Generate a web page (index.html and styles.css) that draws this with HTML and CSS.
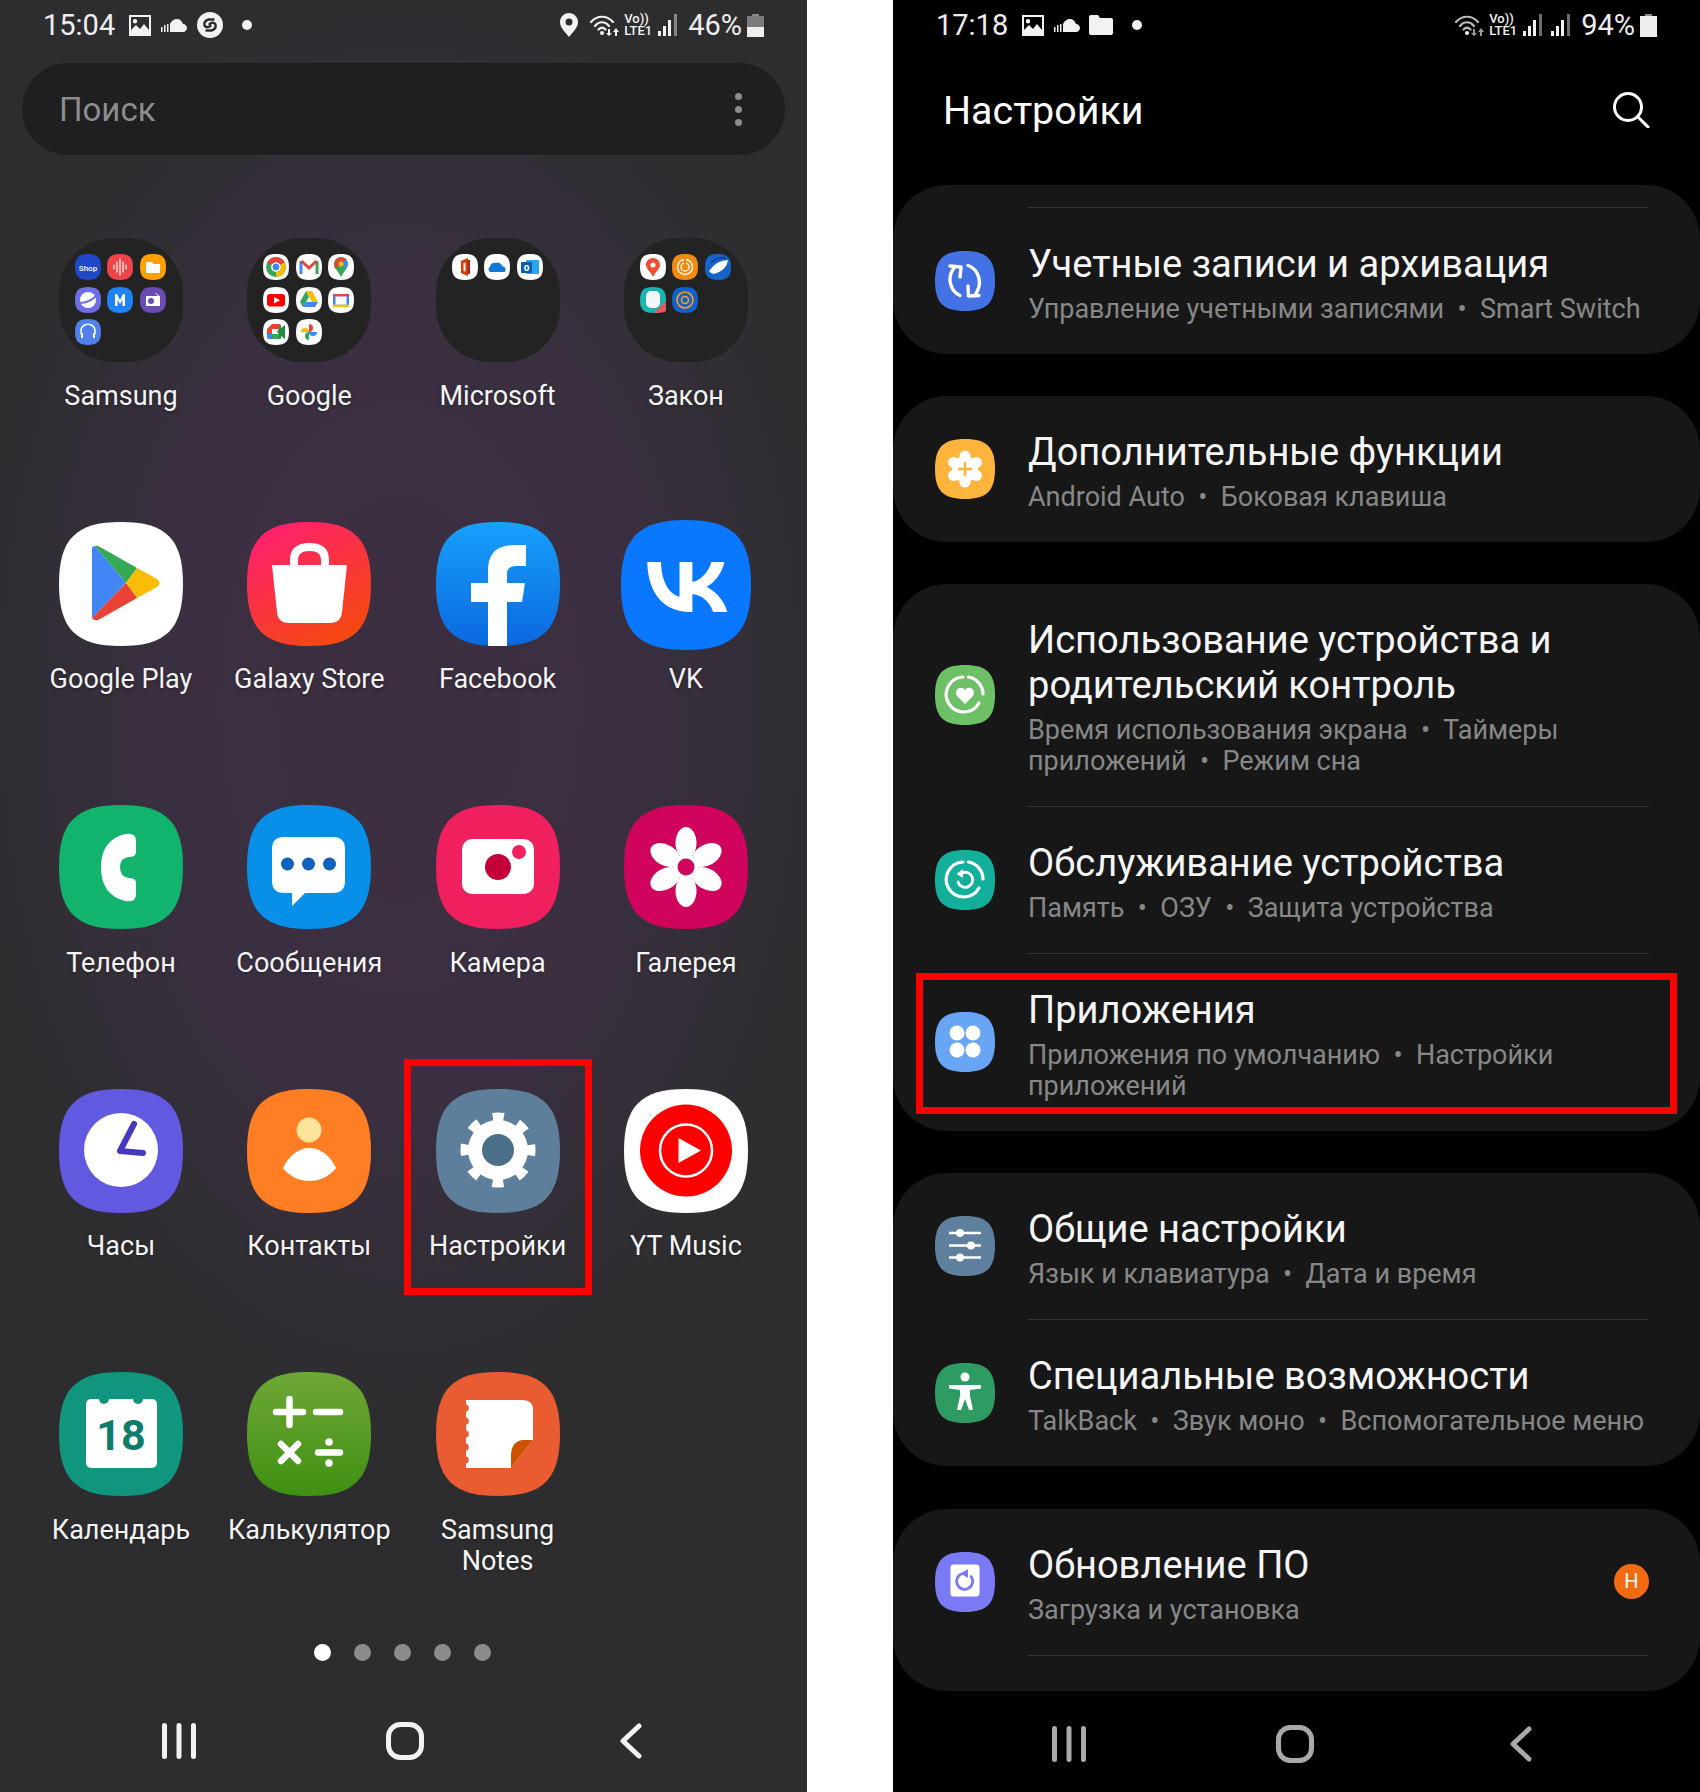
FILE: index.html
```html
<!DOCTYPE html>
<html lang="ru">
<head>
    <meta charset="UTF-8">
    <meta name="viewport" content="width=device-width, initial-scale=1.0">
    <title>Настройки приложений</title>
    <link rel="stylesheet" href="styles.css">
</head>
<body>
    <!-- shared shapes -->
    <svg class="sprite" aria-hidden="true">
        <defs>
            <symbol id="sq" viewBox="0 0 124 124"><path d="M62 0C107 0 124 17 124 62S107 124 62 124 0 107 0 62 17 0 62 0Z"/></symbol>
            <symbol id="photo" viewBox="0 0 22 21"><path fill-rule="evenodd" d="M0 0H22V21H0ZM2 2V15L7 10 11 14 15 9 20 15V2ZM6 4A2.2 2.2 0 1 1 6 8.400 2.200 2.200 0 0 1 6 4Z"/></symbol>
            <symbol id="cloud" viewBox="0 0 26 13"><path d="M9 13V5C10 2 13 0 16 0 19 0 21 2 22 5 24 5 26 7 26 9 26 11 24 13 22 13ZM6 13V5H7.500V13ZM3 13V6H4.500V13ZM0 13V8H1.500V13Z"/></symbol>
            <symbol id="bars" viewBox="0 0 19 22"><path d="M0 17H3V22H0ZM5 12H8V22H5ZM10 6H13V22H10Z"/><path opacity=".45" d="M16 0H19V22H16Z"/></symbol>
            <linearGradient id="store" x1="0.200" y1="0" x2="0.800" y2="1"><stop offset="0" stop-color="#ff1f70"/><stop offset="1" stop-color="#f44a0a"/></linearGradient>
            <linearGradient id="fb" x1="0" y1="0" x2="0" y2="1"><stop offset="0" stop-color="#18a0fb"/><stop offset="1" stop-color="#0a68e0"/></linearGradient>
            <linearGradient id="calc" x1="0" y1="0" x2="0" y2="1"><stop offset="0" stop-color="#6fa736"/><stop offset="1" stop-color="#3e9012"/></linearGradient>
        </defs>
    </svg>

    <section class="phone phone-home">
        <div class="status">
            <span class="clock">15:04</span>
            <svg class="st-photo"><use href="#photo"/></svg>
            <svg class="st-cloud"><use href="#cloud"/></svg>
            <svg class="st-shazam" viewBox="0 0 26 26"><circle cx="13" cy="13" r="13" fill="#f2f2f2"/><path d="M16.500 7.500 11.500 7.500Q6.500 9 7.500 13.500 9.500 16.500 13.500 14M9.500 18.500H14.500Q19.500 17 18.500 12.500 16.500 9.500 12.500 12" fill="none" stroke="#2d2d2f" stroke-width="2.400" stroke-linecap="round"/></svg>
            <i class="st-dot"></i>
            <span class="spacer"></span>
            <svg class="st-pin" viewBox="0 0 18 24"><path fill-rule="evenodd" d="M9 0C14 0 18 4 18 9 18 15 12 20 9 24 6 20 0 15 0 9 0 4 4 0 9 0ZM9 5.500A3.500 3.500 0 1 0 9 12.500 3.500 3.500 0 0 0 9 5.500Z"/></svg>
            <svg class="st-wifi" viewBox="0 0 30 22"><g fill="none" stroke="currentColor" stroke-width="2.200" stroke-linecap="round"><path d="M1 8C7 1 17 1 23 8M5 12C9 7 15 7 19 12M8.500 15.500C11 13 13 13 15.500 15.500"/></g><circle cx="12" cy="19" r="2"/><path d="M18 15H20V19H22L19 22 16 19H18ZM25 22V18H23L26 14 29 18H27V22Z"/></svg>
            <span class="volte">Vo))<br>LTE1</span>
            <svg class="st-bars"><use href="#bars"/></svg>
            <span class="percent">46%</span>
            <span class="battery"><i class="battery-top"></i><i class="battery-level level-46"></i></span>
        </div>

        <div class="search">
            <span class="search-text">Поиск</span>
            <span class="kebab"><i></i><i></i><i></i></span>
        </div>

        <div class="apps">
            <div class="app">
                <div class="folder">
                    <svg class="mini" viewBox="0 0 26 26"><use href="#sq" width="26" height="26" fill="#1f48c9"/><text x="13" y="17" class="mini-text">Shop</text></svg>
                    <svg class="mini" viewBox="0 0 26 26"><use href="#sq" width="26" height="26" fill="#ef4448"/><path d="M7 11V15M10 8V18M13 5V21M16 8V18M19 11V15" stroke="#fff" stroke-width="1.200" stroke-linecap="round"/></svg>
                    <svg class="mini" viewBox="0 0 26 26"><use href="#sq" width="26" height="26" fill="#ffa000"/><path d="M6 8H12L13.500 10H20V19H6Z" fill="#fff"/></svg>
                    <svg class="mini" viewBox="0 0 26 26"><use href="#sq" width="26" height="26" fill="#6f6de6"/><circle cx="13" cy="13" r="8" fill="#fff"/><path d="M5 16Q14 16 21 9" fill="none" stroke="#6f6de6" stroke-width="2"/></svg>
                    <svg class="mini" viewBox="0 0 26 26"><use href="#sq" width="26" height="26" fill="#1f83f4"/><path d="M8 19V7H10L13 13 16 7H18V19H15.500V13L13 17 10.500 13V19Z" fill="#fff"/></svg>
                    <svg class="mini" viewBox="0 0 26 26"><use href="#sq" width="26" height="26" fill="#6a4bb4"/><path d="M6 9H20V19H6Z" fill="#fff"/><circle cx="11" cy="14" r="3" fill="#6a4bb4"/><path d="M15.500 6.500 19 9" stroke="#fff"/></svg>
                    <svg class="mini" viewBox="0 0 26 26"><use href="#sq" width="26" height="26" fill="#4f7fe8"/><path d="M6 15V12C6 3 20 3 20 12V15" fill="none" stroke="#fff" stroke-width="1.500"/><path d="M6 14H8V19H6ZM18 14H20V19H18Z" fill="#fff"/></svg>
                </div>
                <div class="label">Samsung</div>
            </div>
            <div class="app">
                <div class="folder">
                    <svg class="mini" viewBox="0 0 26 26"><use href="#sq" width="26" height="26" fill="#fff"/><circle cx="13" cy="13" r="7.500" fill="none" stroke="#34a853" stroke-width="5"/><path d="M6.500 9.500A7.500 7.500 0 0 1 19.500 9.500" fill="none" stroke="#ea4335" stroke-width="5"/><path d="M19.500 9.500A7.500 7.500 0 0 1 13 20.500" fill="none" stroke="#fbbc04" stroke-width="5"/><circle cx="13" cy="13" r="4" fill="#4285f4" stroke="#fff"/></svg>
                    <svg class="mini" viewBox="0 0 26 26"><use href="#sq" width="26" height="26" fill="#fff"/><path d="M5 20V7" stroke="#4285f4" stroke-width="3"/><path d="M21 20V7" stroke="#34a853" stroke-width="3"/><path d="M5.500 7 13 14 20.500 7" fill="none" stroke="#ea4335" stroke-width="3"/></svg>
                    <svg class="mini" viewBox="0 0 26 26"><use href="#sq" width="26" height="26" fill="#fff"/><path d="M13 3C9 3 6 6 6 10 6 14 10 17 13 23 16 17 20 14 20 10 20 6 17 3 13 3Z" fill="#34a853"/><path d="M9 5C11 3 16 3 18 5L7 15C6 12 6 8 9 5Z" fill="#ea4335"/><path d="M18 5C20 8 20 12 17 15L13 10Z" fill="#4285f4"/><circle cx="13" cy="10" r="2.500" fill="#fbbc04"/></svg>
                    <svg class="mini" viewBox="0 0 26 26"><use href="#sq" width="26" height="26" fill="#fff"/><rect x="4" y="7" width="18" height="12.500" rx="3" fill="#f00"/><path d="M11 10V16.500L17 13.250Z" fill="#fff"/></svg>
                    <svg class="mini" viewBox="0 0 26 26"><use href="#sq" width="26" height="26" fill="#fff"/><path d="M10 4H16L22 15H16Z" fill="#fbbc04"/><path d="M10 4 4 15 7 20 13 10Z" fill="#34a853"/><path d="M7 20H19L22 15H10Z" fill="#4285f4"/></svg>
                    <svg class="mini" viewBox="0 0 26 26"><use href="#sq" width="26" height="26" fill="#fff"/><rect x="5" y="7" width="16" height="13" rx="2" fill="#4285f4"/><rect x="5" y="7" width="16" height="2.500" fill="#ea4335"/><rect x="5" y="17.500" width="16" height="2.500" fill="#fbbc04"/><rect x="7.500" y="9.500" width="11" height="8" fill="#fff"/></svg>
                    <svg class="mini" viewBox="0 0 26 26"><use href="#sq" width="26" height="26" fill="#fff"/><path d="M4 10 9 5H16V10H9V15H4Z" fill="#ea4335"/><path d="M4 15H9V20H6Q4 20 4 18Z" fill="#4285f4"/><path d="M9 15H16V20H9Z" fill="#34a853"/><path d="M16 5Q18 5 18 7V9L22 6V20L18 17V19Q18 20 16 20V15L14 12.500 16 10Z" fill="#1e8e3e"/></svg>
                    <svg class="mini" viewBox="0 0 26 26"><use href="#sq" width="26" height="26" fill="#fff"/><path d="M13 13V5A4 4 0 0 1 13 13Z" fill="#ea4335"/><path d="M13 13H21A4 4 0 0 1 13 13Z" fill="#4285f4"/><path d="M13 13V21A4 4 0 0 1 13 13Z" fill="#34a853"/><path d="M13 13H5A4 4 0 0 1 13 13Z" fill="#fbbc04"/></svg>
                </div>
                <div class="label">Google</div>
            </div>
            <div class="app">
                <div class="folder">
                    <svg class="mini" viewBox="0 0 26 26"><use href="#sq" width="26" height="26" fill="#fff"/><path fill-rule="evenodd" d="M9 7 16 4V22L9 19ZM11.500 9V17L13.500 17.500V8.500Z" fill="#d83b01"/><path d="M16 6H18V20H16Z" fill="#a4262c"/></svg>
                    <svg class="mini" viewBox="0 0 26 26"><use href="#sq" width="26" height="26" fill="#fff"/><path d="M6 18Q3 15 6 13 7 8 12 9 16 7 18 12 23 13 21 18Z" fill="#0f78d4"/></svg>
                    <svg class="mini" viewBox="0 0 26 26"><use href="#sq" width="26" height="26" fill="#fff"/><rect x="9" y="6" width="13" height="14" rx="1" fill="#28a8ea"/><rect x="4" y="8" width="11" height="11" rx="1" fill="#0a5cb0"/><text x="9.500" y="16.500" class="mini-letter">o</text></svg>
                </div>
                <div class="label">Microsoft</div>
            </div>
            <div class="app">
                <div class="folder">
                    <svg class="mini" viewBox="0 0 26 26"><use href="#sq" width="26" height="26" fill="#fff"/><path fill-rule="evenodd" d="M13 4C17 4 20 7 20 11 20 15 15 18 13 23 11 18 6 15 6 11 6 7 9 4 13 4ZM13 8.500A2.500 2.500 0 1 0 13 13.500 2.500 2.500 0 0 0 13 8.500Z" fill="#ec4e30"/></svg>
                    <svg class="mini" viewBox="0 0 26 26"><use href="#sq" width="26" height="26" fill="#f48a10"/><circle cx="13" cy="13" r="7.500" fill="none" stroke="#fff" stroke-width="1.300"/><circle cx="13" cy="13" r="4" fill="none" stroke="#fff" stroke-width="1.300"/><path d="M13 3V13" stroke="#f48a10" stroke-width="2"/></svg>
                    <svg class="mini" viewBox="0 0 26 26"><use href="#sq" width="26" height="26" fill="#1565c9"/><path d="M4 17Q12 6 23 6 22 16 9 20 6 20 4 17Z" fill="#fff"/><path d="M6 9Q12 3 21 4" fill="none" stroke="#0d47a1" stroke-width="2"/></svg>
                    <svg class="mini" viewBox="0 0 26 26"><use href="#sq" width="26" height="26" fill="#16b5b0"/><path d="M14 26 26 14V24Q24 26 14 26Z" fill="#e8555e"/><rect x="6" y="4" width="14" height="17" rx="5" fill="#f3f7fb"/></svg>
                    <svg class="mini" viewBox="0 0 26 26"><use href="#sq" width="26" height="26" fill="#1060cf"/><circle cx="13" cy="13" r="8" fill="none" stroke="#ff9e18" stroke-width="1.600"/><circle cx="13" cy="13" r="3.500" fill="none" stroke="#ff9e18" stroke-width="1.600"/></svg>
                </div>
                <div class="label">Закон</div>
            </div>

            <div class="app">
                <svg class="icon" viewBox="0 0 124 124"><use href="#sq" width="124" height="124" fill="#fff"/><path d="M33 27Q33 24 36 24L67 61 33 96Z" fill="#4285f4"/><path d="M36 24Q38 23 41 25L78 46 67 61Z" fill="#34a853"/><path d="M78 46 98 57Q103 61 98 65L78 76 67 61Z" fill="#fbbc04"/><path d="M67 61 78 76 41 97Q36 100 33 96Z" fill="#ea4335"/></svg>
                <div class="label">Google Play</div>
            </div>
            <div class="app">
                <svg class="icon" viewBox="0 0 124 124"><use href="#sq" width="124" height="124" fill="url(#store)"/><path d="M25 43H100L95 90Q94 101 83 101H42Q31 101 30 90Z" fill="#fff"/><path d="M47 46V38Q47 25 62.500 25 78 25 78 38V46" fill="none" stroke="#fff" stroke-width="8"/></svg>
                <div class="label">Galaxy Store</div>
            </div>
            <div class="app">
                <svg class="icon" viewBox="0 0 124 124"><use href="#sq" width="124" height="124" fill="url(#fb)"/><path d="M52 124V80H35V61H52V48Q52 23 78 23H90V44H80Q71 44 71 52V61H89L86 80H71V124Z" fill="#fff"/></svg>
                <div class="label">Facebook</div>
            </div>
            <div class="app">
                <svg class="icon icon-vk" viewBox="0 0 130 130"><use href="#sq" width="130" height="130" fill="#0a77ff"/><path d="M69.700 92C42.400 92 26.900 73.300 26.300 42H40C40.400 65 50.500 74.700 58.500 76.700V42H71.400V61.800C79.300 61 87.600 52 90.400 42H103.300C101.100 54.200 92.100 63.200 85.700 67 92.100 70 102.400 77.900 106.300 92H92.100C89 82.500 81.400 75.100 71.400 74.100V92Z" fill="#fff"/></svg>
                <div class="label">VK</div>
            </div>

            <div class="app">
                <svg class="icon" viewBox="0 0 124 124"><use href="#sq" width="124" height="124" fill="#12b36c"/><path d="M66 29Q77 27 77 36V47Q77 52 70 52 61 53 61 62 61 72 70 73 77 73 77 78V89Q77 98 66 96 42 90 42 62 42 35 66 29Z" fill="#fff"/></svg>
                <div class="label">Телефон</div>
            </div>
            <div class="app">
                <svg class="icon" viewBox="0 0 124 124"><use href="#sq" width="124" height="124" fill="#0890e8"/><path d="M37 32H86Q98 32 98 44V76Q98 88 86 88H58L45 101V88H37Q25 88 25 76V44Q25 32 37 32Z" fill="#fff"/><circle cx="40.500" cy="59" r="6.500" fill="#0c62bd"/><circle cx="61.500" cy="59" r="6.500" fill="#0c62bd"/><circle cx="82.500" cy="59" r="6.500" fill="#0c62bd"/></svg>
                <div class="label">Сообщения</div>
            </div>
            <div class="app">
                <svg class="icon" viewBox="0 0 124 124"><use href="#sq" width="124" height="124" fill="#f0205e"/><rect x="26" y="34" width="72" height="55" rx="10" fill="#fff"/><circle cx="62" cy="62" r="13" fill="#c4003a"/><circle cx="83" cy="47" r="7" fill="#f0205e"/></svg>
                <div class="label">Камера</div>
            </div>
            <div class="app">
                <svg class="icon" viewBox="0 0 124 124"><use href="#sq" width="124" height="124" fill="#d0045c"/><g fill="#fff"><ellipse cx="62" cy="38" rx="10.500" ry="16"/><ellipse cx="62" cy="38" rx="10.500" ry="16" transform="rotate(60 62 62)"/><ellipse cx="62" cy="38" rx="10.500" ry="16" transform="rotate(120 62 62)"/><ellipse cx="62" cy="38" rx="10.500" ry="16" transform="rotate(180 62 62)"/><ellipse cx="62" cy="38" rx="10.500" ry="16" transform="rotate(240 62 62)"/><ellipse cx="62" cy="38" rx="10.500" ry="16" transform="rotate(300 62 62)"/></g><circle cx="62" cy="62" r="13" fill="#fff"/><circle cx="62" cy="62" r="8.500" fill="#d0045c"/></svg>
                <div class="label">Галерея</div>
            </div>

            <div class="app">
                <svg class="icon" viewBox="0 0 124 124"><use href="#sq" width="124" height="124" fill="#6159e0"/><circle cx="62" cy="61" r="37" fill="#fff"/><path d="M75 35 61 62 84 64" fill="none" stroke="#4438c0" stroke-width="6" stroke-linecap="round" stroke-linejoin="round"/></svg>
                <div class="label">Часы</div>
            </div>
            <div class="app">
                <svg class="icon" viewBox="0 0 124 124"><use href="#sq" width="124" height="124" fill="#ff7d23"/><circle cx="62" cy="41" r="12.500" fill="#fbe39a"/><path d="M36 79C42 66 52 59 62.500 59 73 59 83 66 89 79 82 88 72 92 62.500 92 53 92 43 88 36 79Z" fill="#fff"/></svg>
                <div class="label">Контакты</div>
            </div>
            <div class="app app-marked">
                <svg class="icon" viewBox="0 0 124 124"><use href="#sq" width="124" height="124" fill="#5d7f9b"/><circle cx="62" cy="61" r="30" fill="#fff"/><circle cx="62" cy="61" r="33" fill="none" stroke="#fff" stroke-width="9" stroke-dasharray="11 14.920" stroke-dashoffset="5.500"/><circle cx="62" cy="61" r="16" fill="#4b7089"/></svg>
                <div class="label">Настройки</div>
            </div>
            <div class="app">
                <svg class="icon" viewBox="0 0 124 124"><use href="#sq" width="124" height="124" fill="#fff"/><circle cx="62" cy="61.500" r="46" fill="#f00"/><circle cx="62" cy="61.500" r="26" fill="none" stroke="#fff" stroke-width="2.500"/><path d="M54.500 49 77 61.500 54.500 74Z" fill="#fff"/></svg>
                <div class="label">YT Music</div>
            </div>

            <div class="app">
                <svg class="icon" viewBox="0 0 124 124"><use href="#sq" width="124" height="124" fill="#11967e"/><rect x="27" y="27" width="71" height="69" rx="5" fill="#fff"/><circle cx="45" cy="27" r="5" fill="#11967e"/><circle cx="79" cy="27" r="5" fill="#11967e"/><text x="62" y="78" class="cal-day">18</text></svg>
                <div class="label">Календарь</div>
            </div>
            <div class="app">
                <svg class="icon" viewBox="0 0 124 124"><use href="#sq" width="124" height="124" fill="url(#calc)"/><g fill="none" stroke="#fff" stroke-width="6.500" stroke-linecap="round"><path d="M29 40H56M42.500 27V53M69 40H93M34 72 51 89M51 72 34 89M71 80.500H93"/></g><circle cx="82" cy="70" r="3.800" fill="#fff"/><circle cx="82" cy="91" r="3.800" fill="#fff"/></svg>
                <div class="label">Калькулятор</div>
            </div>
            <div class="app">
                <svg class="icon" viewBox="0 0 124 124"><use href="#sq" width="124" height="124" fill="#e95b30"/><path d="M30 28H87Q97 28 97 38V68L75 96H30Z" fill="#fff"/><g fill="#e95b30"><circle cx="29" cy="36" r="3.800"/><circle cx="29" cy="49" r="3.800"/><circle cx="29" cy="62" r="3.800"/><circle cx="29" cy="75" r="3.800"/><circle cx="29" cy="88" r="3.800"/></g><path d="M97 68H86Q75 70 75 84V96Z" fill="#cc5200"/></svg>
                <div class="label">Samsung<br>Notes</div>
            </div>
        </div>

        <div class="dots"><i class="dot-on"></i><i></i><i></i><i></i><i></i></div>

        <div class="nav nav-home">
            <svg class="nav-recent" viewBox="0 0 34 36"><path d="M2.500 2.500V33.500M17 2.500V33.500M31.500 2.500V33.500"/></svg>
            <svg class="nav-main" viewBox="0 0 38 38"><rect x="2.500" y="2.500" width="33" height="33" rx="12"/></svg>
            <svg class="nav-back" viewBox="0 0 24 36"><path d="M20 3 4 18 20 33"/></svg>
        </div>
    </section>

    <section class="phone phone-settings">
        <div class="status">
            <span class="clock">17:18</span>
            <svg class="st-photo"><use href="#photo"/></svg>
            <svg class="st-cloud"><use href="#cloud"/></svg>
            <svg class="st-folder" viewBox="0 0 24 20"><path d="M0 2Q0 0 2 0H9L11 3H22Q24 3 24 5V18Q24 20 22 20H2Q0 20 0 18Z"/></svg>
            <i class="st-dot"></i>
            <span class="spacer"></span>
            <svg class="st-wifi" viewBox="0 0 30 22"><g fill="none" stroke="#bcbcbc" stroke-width="2.200" stroke-linecap="round"><path d="M1 8C7 1 17 1 23 8M5 12C9 7 15 7 19 12M8.500 15.500C11 13 13 13 15.500 15.500"/></g><circle cx="12" cy="19" r="2"/><path fill="#9a9a9a" d="M18 15H20V19H22L19 22 16 19H18ZM25 22V18H23L26 14 29 18H27V22Z"/></svg>
            <span class="volte">Vo))<br>LTE1</span>
            <svg class="st-bars"><use href="#bars"/></svg>
            <svg class="st-bars st-bars-2"><use href="#bars"/></svg>
            <span class="percent">94%</span>
            <span class="battery"><i class="battery-top"></i><i class="battery-level level-94"></i></span>
        </div>

        <div class="header">
            <h1 class="header-title">Настройки</h1>
            <svg class="header-search" viewBox="0 0 38 36"><circle cx="16" cy="15" r="13.500"/><path d="M26 25 36 35"/></svg>
        </div>

        <div class="cards">
            <div class="card">
                <div class="divider divider-first"></div>
                <div class="row">
                    <svg class="row-icon" viewBox="0 0 60 60"><use href="#sq" width="60" height="60" fill="#4472e4"/><g fill="none" stroke="#fff" stroke-width="3.400" stroke-linecap="round" stroke-linejoin="round"><path d="M25 44.500C16 41 11 27 19 17"/><path d="M15 15 26 16 25 26"/><path d="M33 14.500C43 18 49 32 40 44"/><path d="M33 35 33.500 45 44 44.500"/></g></svg>
                    <div class="row-text">
                        <div class="row-title">Учетные записи и архивация</div>
                        <div class="row-sub">Управление учетными записями&nbsp; •&nbsp; Smart Switch</div>
                    </div>
                </div>
            </div>

            <div class="card">
                <div class="row">
                    <svg class="row-icon" viewBox="0 0 60 60"><use href="#sq" width="60" height="60" fill="#fdb43d"/><g fill="#fff"><circle cx="30" cy="30" r="13"/><circle cx="30" cy="17" r="5.500"/><circle cx="30" cy="43" r="5.500"/><circle cx="18.700" cy="23.500" r="5.500"/><circle cx="41.300" cy="23.500" r="5.500"/><circle cx="18.700" cy="36.500" r="5.500"/><circle cx="41.300" cy="36.500" r="5.500"/></g><path d="M30 23V37M23 30H37" stroke="#fdb43d" stroke-width="2.500"/></svg>
                    <div class="row-text">
                        <div class="row-title">Дополнительные функции</div>
                        <div class="row-sub">Android Auto&nbsp; •&nbsp; Боковая клавиша</div>
                    </div>
                </div>
            </div>

            <div class="card">
                <div class="row">
                    <svg class="row-icon" viewBox="0 0 60 60"><use href="#sq" width="60" height="60" fill="#6dc066"/><g fill="none" stroke="#fff" stroke-width="3.200" stroke-linecap="round"><path d="M28 12A17.500 17.500 0 1 0 44 38"/><path d="M33.500 12A17.500 17.500 0 0 1 48 29"/></g><path d="M30 39 22 31Q19 26 24 23 28 22 30 25 32 22 36 23 41 26 38 31Z" fill="#fff"/></svg>
                    <div class="row-text">
                        <div class="row-title">Использование устройства и родительский контроль</div>
                        <div class="row-sub">Время использования экрана&nbsp; •&nbsp; Таймеры приложений&nbsp; •&nbsp; Режим сна</div>
                    </div>
                </div>
                <div class="divider"></div>
                <div class="row">
                    <svg class="row-icon" viewBox="0 0 60 60"><use href="#sq" width="60" height="60" fill="#12b09a"/><g fill="none" stroke="#fff" stroke-linecap="round"><path d="M28 12A17.500 17.500 0 1 0 44 38" stroke-width="3.200"/><path d="M33.500 12A17.500 17.500 0 0 1 48 29" stroke-width="3.200"/><path d="M27 23A7.500 7.500 0 1 1 23 32" stroke-width="2.800"/></g><path d="M28 19V28L21.500 24Z" fill="#fff"/></svg>
                    <div class="row-text">
                        <div class="row-title">Обслуживание устройства</div>
                        <div class="row-sub">Память&nbsp; •&nbsp; ОЗУ&nbsp; •&nbsp; Защита устройства</div>
                    </div>
                </div>
                <div class="divider"></div>
                <div class="row row-marked">
                    <svg class="row-icon" viewBox="0 0 60 60"><use href="#sq" width="60" height="60" fill="#69a5f5"/><g fill="#fff"><circle cx="22" cy="21" r="7.500"/><circle cx="38" cy="21" r="7.500"/><circle cx="22" cy="38" r="7.500"/><circle cx="38" cy="38" r="7.500"/></g></svg>
                    <div class="row-text">
                        <div class="row-title">Приложения</div>
                        <div class="row-sub">Приложения по умолчанию&nbsp; •&nbsp; Настройки приложений</div>
                    </div>
                </div>
            </div>

            <div class="card">
                <div class="row">
                    <svg class="row-icon" viewBox="0 0 60 60"><use href="#sq" width="60" height="60" fill="#5f7f9e"/><path d="M14 17H46M14 29.500H46M14 41.500H46" stroke="#fff" stroke-width="2.500"/><g fill="#fff"><circle cx="25" cy="17" r="4"/><circle cx="36" cy="29.500" r="4"/><circle cx="25" cy="41.500" r="4"/></g></svg>
                    <div class="row-text">
                        <div class="row-title">Общие настройки</div>
                        <div class="row-sub">Язык и клавиатура&nbsp; •&nbsp; Дата и время</div>
                    </div>
                </div>
                <div class="divider"></div>
                <div class="row">
                    <svg class="row-icon" viewBox="0 0 60 60"><use href="#sq" width="60" height="60" fill="#2e9b62"/><circle cx="30" cy="14" r="4.500" fill="#fff"/><path d="M14 22H46V25.500L35 27V33L38 47H34L30 36 26 47H22L25 33V27L14 25.500Z" fill="#fff"/></svg>
                    <div class="row-text">
                        <div class="row-title">Специальные возможности</div>
                        <div class="row-sub">TalkBack&nbsp; •&nbsp; Звук моно&nbsp; •&nbsp; Вспомогательное меню</div>
                    </div>
                </div>
            </div>

            <div class="card card-last">
                <div class="row">
                    <svg class="row-icon" viewBox="0 0 60 60"><use href="#sq" width="60" height="60" fill="#7a7af5"/><rect x="15.500" y="12.500" width="29" height="32" rx="3" fill="#fff"/><path d="M28 21.500A8 8 0 1 0 36 24.500" fill="none" stroke="#7a7af5" stroke-width="2.800" stroke-linecap="round"/><path d="M33 17 25.500 21.500 33 26Z" fill="#7a7af5"/></svg>
                    <div class="row-text">
                        <div class="row-title">Обновление ПО</div>
                        <div class="row-sub">Загрузка и установка</div>
                    </div>
                    <span class="badge">Н</span>
                </div>
                <div class="divider"></div>
            </div>
        </div>

        <div class="nav nav-settings">
            <svg class="nav-recent" viewBox="0 0 34 36"><path d="M2.500 2.500V33.500M17 2.500V33.500M31.500 2.500V33.500"/></svg>
            <svg class="nav-main" viewBox="0 0 38 38"><rect x="2.500" y="2.500" width="33" height="33" rx="12"/></svg>
            <svg class="nav-back" viewBox="0 0 24 36"><path d="M20 3 4 18 20 33"/></svg>
        </div>
    </section>
</body>
</html>
```

FILE: styles.css
```css
body {
    margin: 0;
    background-color: #fff;
    display: flex;
    justify-content: space-between;
    width: 1700px;
    font-family: "Roboto", "Liberation Sans", sans-serif;
}

.sprite {
    position: absolute;
    width: 0;
    height: 0;
}

.phone {
    width: 807px;
    height: 1792px;
    overflow: hidden;
    display: flex;
    flex-direction: column;
    color: #f2f2f2;
    fill: currentColor;
}

.phone-home {
    background-color: #2d2d2f;
    background-image: radial-gradient(ellipse 440px 720px at 400px 700px, #3c2e41 0%, #3a2f40 55%, #2d2d2f 100%);
}

.phone-settings {
    background-color: #000;
}

/* status bar */
.status {
    height: 50px;
    padding: 0 43px 0 43px;
    display: flex;
    align-items: center;
    flex-shrink: 0;
}

.spacer {
    flex: 1;
}

.clock,
.percent {
    font-size: 29px;
    line-height: 50px;
    color: #eee;
}

.st-photo {
    width: 22px;
    height: 21px;
    margin-left: 14px;
}

.st-cloud {
    width: 26px;
    height: 13px;
    margin-left: 10px;
}

.st-shazam {
    width: 26px;
    height: 26px;
    margin-left: 10px;
}

.st-folder {
    width: 24px;
    height: 20px;
    margin-left: 9px;
}

.st-dot {
    width: 10px;
    height: 10px;
    border-radius: 50%;
    background-color: #f2f2f2;
    margin-left: 19px;
}

.st-pin {
    width: 18px;
    height: 24px;
}

.st-wifi {
    width: 30px;
    height: 22px;
    margin-left: 12px;
}

.volte {
    font-size: 13px;
    font-weight: 500;
    line-height: 12px;
    margin-left: 4px;
    width: 30px;
}

.st-bars {
    width: 19px;
    height: 22px;
    margin-left: 4px;
}

.st-bars-2 {
    margin-left: 9px;
}

.percent {
    margin-left: 11px;
}

.battery {
    width: 17px;
    height: 23px;
    margin-left: 5px;
    display: flex;
    flex-direction: column;
}

.battery-top {
    width: 7px;
    height: 2px;
    margin: 0 auto;
    background-color: #8a8a8a;
    flex-shrink: 0;
}

.battery-level {
    flex: 1;
    background-color: #eee;
}

.level-46 {
    background: linear-gradient(#7c7c7c 0 53%, #eee 53%);
}

.level-94 {
    background: #eee;
}

/* home screen */
.search {
    height: 92px;
    margin: 13px 22px 0 22px;
    padding: 0 43px 0 37px;
    border-radius: 46px;
    background-color: #1f1e20;
    display: flex;
    align-items: center;
    justify-content: space-between;
    flex-shrink: 0;
}

.search-text {
    font-size: 33px;
    color: #8d8d8d;
}

.kebab {
    display: flex;
    flex-direction: column;
    gap: 6px;
}

.kebab i {
    width: 7px;
    height: 7px;
    border-radius: 50%;
    background-color: #8d8d8d;
}

.apps {
    margin: 83px 0 0 26.85px;
    display: grid;
    grid-template-columns: repeat(4, 188.3px);
    grid-template-rows: repeat(4, 283.5px) 272px;
    flex-shrink: 0;
}

.app {
    display: flex;
    flex-direction: column;
    align-items: center;
    position: relative;
}

.icon,
.folder {
    width: 124px;
    height: 124px;
}

.icon-vk {
    width: 130px;
    height: 130px;
    margin: -2px 0 -4px;
}

.folder {
    box-sizing: border-box;
    padding: 16px;
    border-radius: 44%;
    background-color: #232324;
    display: grid;
    grid-template-columns: repeat(3, 26px);
    grid-auto-rows: 26px;
    gap: 6.5px;
}

.mini {
    width: 26px;
    height: 26px;
}

.mini-text {
    font-size: 8px;
    font-weight: 500;
    fill: #fff;
    text-anchor: middle;
}

.mini-letter {
    font-size: 10px;
    font-weight: 700;
    fill: #fff;
    text-anchor: middle;
}

.cal-day {
    font-size: 43px;
    font-weight: 700;
    fill: #0f7d6b;
    text-anchor: middle;
}

.label {
    margin-top: 18.5px;
    font-size: 27px;
    line-height: 31px;
    color: #f4f4f4;
    text-align: center;
    text-shadow: 0 1px 3px rgba(0, 0, 0, 0.35);
}

.app-marked::after {
    content: "";
    position: absolute;
    top: -29.5px;
    left: 1px;
    width: 188px;
    height: 236px;
    box-sizing: border-box;
    border: 7px solid #f00;
}

.dots {
    height: 17px;
    padding-left: 314px;
    display: flex;
    gap: 23px;
    flex-shrink: 0;
}

.dots i {
    width: 17px;
    height: 17px;
    border-radius: 50%;
    background-color: #8c8c8c;
}

.dots .dot-on {
    background-color: #fff;
}

/* bottom navigation */
.nav {
    display: grid;
    grid-template-columns: repeat(3, 225.75px);
    justify-items: center;
    align-items: center;
    height: 37px;
    flex-shrink: 0;
    color: #f2f2f2;
}

.nav-home {
    margin-top: 61px;
    padding-left: 66.6px;
}

.nav-settings {
    margin-top: 34px;
    padding-left: 63.6px;
    color: #a9a9a9;
}

.nav svg {
    fill: none;
    stroke: currentColor;
    stroke-width: 5;
    stroke-linecap: round;
    stroke-linejoin: round;
    height: 36px;
}

.nav-recent {
    width: 34px;
}

.nav .nav-main {
    width: 38px;
    height: 38px;
}

.nav-back {
    width: 24px;
}

/* settings screen */
.header {
    height: 135px;
    padding: 0 50px 0 50px;
    box-sizing: border-box;
    display: flex;
    align-items: center;
    justify-content: space-between;
    flex-shrink: 0;
}

.header-title {
    margin: 0 0 15px;
    font-size: 39.4px;
    font-weight: 400;
    line-height: 45px;
    color: #fff;
}

.header-search {
    width: 38px;
    height: 36px;
    margin-bottom: 15px;
    fill: none;
    stroke: #fff;
    stroke-width: 3;
    stroke-linecap: round;
}

.cards {
    display: flex;
    flex-direction: column;
    gap: 42px;
}

.card {
    background-color: #171717;
    border-radius: 54px;
}

.card-last {
    margin-top: 1px;
    padding-bottom: 35px;
}

.divider {
    height: 1px;
    margin: 0 51px 0 134px;
    background-color: #333;
}

.divider-first {
    margin-top: 22px;
}

.row {
    display: flex;
    align-items: center;
    padding: 34px 46px 29px 42px;
    position: relative;
}

.row-icon {
    width: 60px;
    height: 60px;
    margin-bottom: 6px;
    flex-shrink: 0;
}

.row-text {
    margin-left: 33px;
    flex: 1;
}

.row-title {
    font-size: 38.1px;
    line-height: 45px;
    color: #f5f5f5;
}

.row-sub {
    margin-top: 7px;
    font-size: 27px;
    line-height: 31px;
    color: #878787;
}

.badge {
    width: 35px;
    height: 35px;
    margin: 0 5px 6px 0;
    border-radius: 50%;
    background-color: #f26a12;
    color: #fff;
    font-size: 20px;
    line-height: 35px;
    text-align: center;
}

.row-marked::after {
    content: "";
    position: absolute;
    top: 19px;
    bottom: 17px;
    left: 23px;
    right: 23px;
    border: 7px solid #f00;
}
```
